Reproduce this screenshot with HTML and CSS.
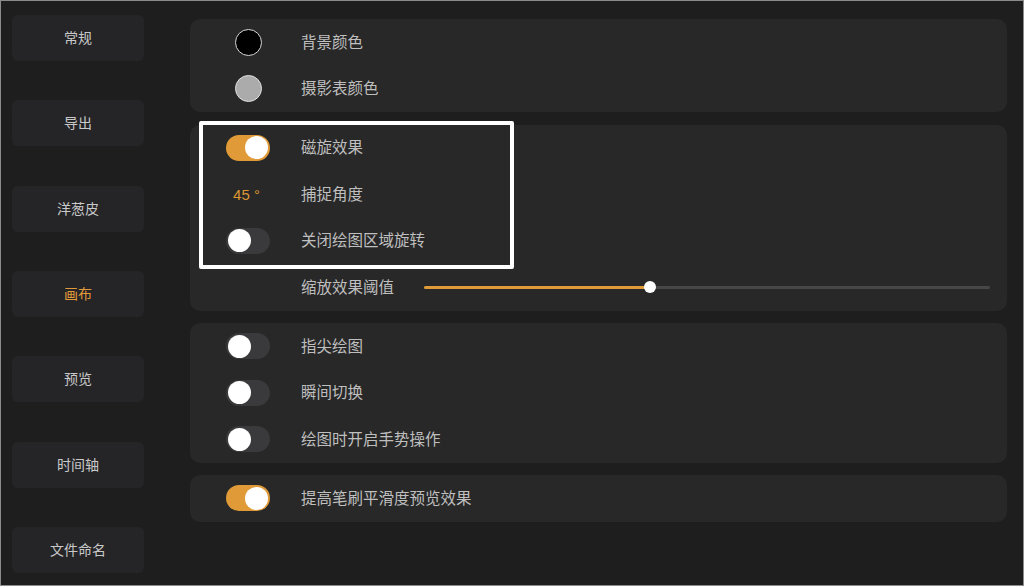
FILE: index.html
```html
<!DOCTYPE html>
<html lang="zh">
<head>
<meta charset="utf-8">
<link rel="stylesheet" href="styles.css">
</head>
<body>
<div class="screen">
  <nav class="sidebar">
    <div class="nav-btn">常规</div>
    <div class="nav-btn">导出</div>
    <div class="nav-btn">洋葱皮</div>
    <div class="nav-btn active">画布</div>
    <div class="nav-btn">预览</div>
    <div class="nav-btn">时间轴</div>
    <div class="nav-btn">文件命名</div>
  </nav>
  <main class="main">
    <section class="card">
      <div class="row"><div class="slot"><span class="swatch black"></span></div><span class="label">背景颜色</span></div>
      <div class="row"><div class="slot"><span class="swatch grey"></span></div><span class="label">摄影表颜色</span></div>
    </section>
    <section class="card">
      <div class="row"><div class="slot"><span class="toggle on"><span class="knob"></span></span></div><span class="label">磁旋效果</span></div>
      <div class="row"><div class="slot"><span class="value">45 °</span></div><span class="label">捕捉角度</span></div>
      <div class="row"><div class="slot"><span class="toggle"><span class="knob"></span></span></div><span class="label">关闭绘图区域旋转</span></div>
      <div class="row"><div class="slot"></div><span class="label">缩放效果阈值</span>
        <div class="slider"><div class="fill" style="width:40%"></div><span class="thumb" style="left:40%"></span></div>
      </div>
    </section>
    <section class="card">
      <div class="row"><div class="slot"><span class="toggle"><span class="knob"></span></span></div><span class="label">指尖绘图</span></div>
      <div class="row"><div class="slot"><span class="toggle"><span class="knob"></span></span></div><span class="label">瞬间切换</span></div>
      <div class="row"><div class="slot"><span class="toggle"><span class="knob"></span></span></div><span class="label">绘图时开启手势操作</span></div>
    </section>
    <section class="card">
      <div class="row"><div class="slot"><span class="toggle on"><span class="knob"></span></span></div><span class="label">提高笔刷平滑度预览效果</span></div>
    </section>
    <div class="highlight"></div>
  </main>
</div>
</body>
</html>
```

FILE: styles.css
```css
* { box-sizing: border-box; }
html, body { margin: 0; padding: 0; background: #1e1e1e; }
body {
  font-family: "Noto Sans CJK SC", "Noto Sans", sans-serif;
}
.screen {
  width: 1024px;
  height: 586px;
  border: 1px solid #8c8c8c;
  background: #1e1e1f;
  display: flex;
  gap: 46px;
  padding: 14px 0 0 11px;
  overflow: hidden;
}
.sidebar {
  width: 132px;
  display: flex;
  flex-direction: column;
  gap: 39.33px;
  flex-shrink: 0;
}
.nav-btn {
  height: 46px;
  border-radius: 6px;
  background: #252528;
  color: #c9c9c9;
  font-size: 14px;
  display: flex;
  align-items: center;
  justify-content: center;
  padding-bottom: 2px;
}
.nav-btn.active { color: #e09a38; }
.main {
  position: relative;
  width: 817px;
  padding-top: 4px;
  display: flex;
  flex-direction: column;
  gap: 12.5px;
}
.card {
  background: #282828;
  border-radius: 10px;
  display: flex;
  flex-direction: column;
}
.row {
  height: 46.5px;
  display: flex;
  align-items: center;
  padding-left: 36px;
}
.slot {
  width: 44px;
  height: 27px;
  display: flex;
  align-items: center;
  justify-content: center;
  flex-shrink: 0;
}
.label {
  margin-left: 31px;
  font-size: 15.5px;
  line-height: 20px;
  color: #bfbfbf;
  white-space: nowrap;
  padding-bottom: 3px;
}
.swatch {
  width: 27px;
  height: 27px;
  border-radius: 50%;
  border: 1.5px solid #d8d8d8;
}
.swatch.black { background: #000; }
.swatch.grey { background: #ababab; border-color: #e0e0e0; }
.toggle {
  width: 44px;
  height: 26px;
  border-radius: 13px;
  background: #3a3a3d;
  display: flex;
  align-items: center;
  padding: 0 2px;
}
.toggle.on { background: #e09b38; justify-content: flex-end; }
.knob {
  width: 23px;
  height: 23px;
  border-radius: 50%;
  background: #ffffff;
}
.value {
  font-family: "Liberation Sans", "Noto Sans", sans-serif;
  font-size: 15px;
  color: #dc9733;
  white-space: nowrap;
  margin-left: -3px;
}
.slider {
  position: relative;
  flex: 1;
  height: 3px;
  margin-left: 30px;
  margin-right: 17px;
  background: #474747;
  border-radius: 2px;
}
.fill {
  height: 3px;
  background: #e09b38;
  border-radius: 2px;
}
.thumb {
  position: absolute;
  top: 50%;
  width: 12px;
  height: 12px;
  margin-left: -6px;
  margin-top: -6px;
  border-radius: 50%;
  background: #ffffff;
}
.highlight {
  position: absolute;
  left: 9px;
  top: 106px;
  width: 315px;
  height: 148px;
  border: 4px solid #ffffff;
  border-radius: 2px;
  pointer-events: none;
}
```
